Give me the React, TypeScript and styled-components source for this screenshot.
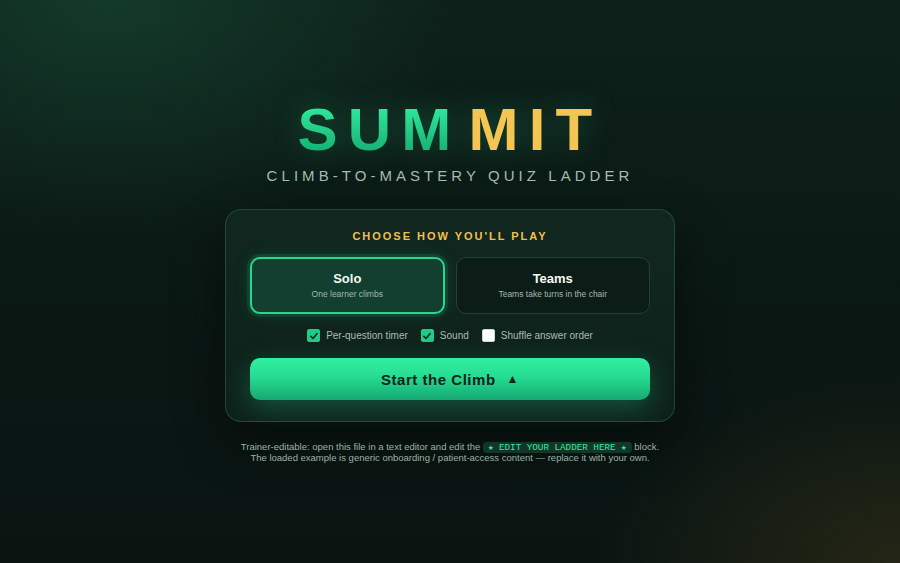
import React, { useState } from 'react'
import styled, { createGlobalStyle } from 'styled-components'

const GlobalStyle = createGlobalStyle`
  html, body {
    margin: 0;
    padding: 0;
    height: 100%;
  }
  body {
    font-family: 'Liberation Sans', Arial, sans-serif;
    background: #0a1612;
    color: #e8f2ec;
  }
  #root {
    min-height: 100vh;
  }
`

const Page = styled.main`
  min-height: 100vh;
  box-sizing: border-box;
  display: flex;
  flex-direction: column;
  align-items: center;
  justify-content: center;
  padding: 0 20px;
  background:
    radial-gradient(ellipse 55% 60% at 12% 0%, rgba(24, 78, 56, 0.55), transparent 70%),
    radial-gradient(ellipse 45% 45% at 100% 100%, rgba(58, 52, 24, 0.55), transparent 75%),
    linear-gradient(180deg, #0d211a 0%, #0a1713 60%, #0a1512 100%);
`

const Title = styled.h1`
  margin: 0;
  font-size: 60px;
  line-height: 60px;
  font-weight: 700;
  letter-spacing: 0.17em;
  filter: drop-shadow(0 0 14px rgba(46, 232, 154, 0.25));
`

const TitlePart = styled.span<{ $tone: 'green' | 'gold' }>`
  display: inline-block;
  ${({ $tone }) =>
    $tone === 'green'
      ? `
    background: linear-gradient(180deg, #33f0a2 0%, #12a86c 100%);
    -webkit-background-clip: text;
    background-clip: text;
    color: transparent;
  `
      : `
    color: #f4c552;
    margin-left: 7px;
  `}
`

const Subtitle = styled.p`
  margin: 8px 0 0;
  font-size: 15px;
  line-height: 15px;
  letter-spacing: 0.27em;
  color: #a3bdb0;
  text-transform: uppercase;
`

const Card = styled.section`
  margin-top: 26px;
  width: 450px;
  box-sizing: border-box;
  padding: 21px 24px 21px;
  border-radius: 16px;
  border: 1px solid rgba(70, 140, 108, 0.35);
  background: linear-gradient(180deg, #10271f 0%, #0e211b 100%);
  box-shadow: 0 20px 50px rgba(0, 0, 0, 0.45);
  display: flex;
  flex-direction: column;
  align-items: stretch;
`

const CardHeading = styled.h2`
  margin: 0;
  text-align: center;
  font-size: 11px;
  line-height: 11px;
  font-weight: 700;
  letter-spacing: 0.18em;
  color: #f0c04e;
`

const ModeRow = styled.div`
  margin-top: 15px;
  display: grid;
  grid-template-columns: 1fr 1fr;
  gap: 11px;
`

const ModeButton = styled.button<{ $active: boolean }>`
  height: 57px;
  padding: 0;
  border-radius: 10px;
  font-family: inherit;
  cursor: pointer;
  display: flex;
  flex-direction: column;
  align-items: center;
  justify-content: center;
  gap: 5px;
  box-sizing: border-box;
  border: ${({ $active }) => ($active ? '2px solid #28d68e' : '1.5px solid #1f4436')};
  background: ${({ $active }) => ($active ? '#123f2f' : '#0c1d17')};
  box-shadow: ${({ $active }) =>
    $active ? '0 0 0 3px rgba(40, 214, 142, 0.12), 0 0 16px rgba(40, 214, 142, 0.18)' : 'none'};
`

const ModeTitle = styled.span`
  font-size: 13px;
  line-height: 13px;
  font-weight: 700;
  color: #f4faf6;
`

const ModeText = styled.span`
  font-size: 8.5px;
  line-height: 9px;
  color: #a0b8ac;
`

const Options = styled.div`
  margin-top: 15px;
  display: flex;
  justify-content: center;
  gap: 13px;
`

const Option = styled.label`
  display: flex;
  align-items: center;
  gap: 6px;
  cursor: pointer;
  font-size: 10px;
  color: #a6bcb1;
`

const Box = styled.span<{ $checked: boolean }>`
  width: 13px;
  height: 13px;
  box-sizing: border-box;
  border-radius: 2px;
  display: flex;
  align-items: center;
  justify-content: center;
  background: ${({ $checked }) => ($checked ? '#22c98a' : '#ffffff')};
  border: 1px solid ${({ $checked }) => ($checked ? '#22c98a' : '#cfd8d3')};
`

const StartButton = styled.button`
  margin-top: 16px;
  height: 42px;
  border: 0;
  border-radius: 10px;
  cursor: pointer;
  font-family: inherit;
  font-size: 15px;
  font-weight: 700;
  letter-spacing: 0.035em;
  color: #0a2419;
  background: linear-gradient(180deg, #30f0a0 0%, #26dc92 45%, #16a872 100%);
  box-shadow: 0 8px 26px rgba(40, 220, 146, 0.28);
  display: flex;
  align-items: center;
  justify-content: center;
  gap: 11px;
`

const Arrow = styled.span`
  font-size: 12px;
`

const Footer = styled.p`
  margin: 19px 0 0;
  text-align: center;
  font-size: 9.5px;
  line-height: 11px;
  color: #9ab2a6;
`

const Code = styled.code`
  font-family: 'Liberation Mono', 'DejaVu Sans Mono', monospace;
  font-size: 9.25px;
  line-height: 8px;
  color: #3ee89c;
  background: #12372a;
  border-radius: 4px;
  padding: 0 5px;
`

const Check = () => (
  <svg width="10" height="10" viewBox="0 0 12 12" fill="none">
    <path d="M2.2 6.4 L4.8 9 L9.8 3" stroke="#0b2a1d" strokeWidth="1.9" strokeLinecap="round" strokeLinejoin="round" />
  </svg>
)

const modes = [
  { id: 'solo', title: 'Solo', text: 'One learner climbs' },
  { id: 'teams', title: 'Teams', text: 'Teams take turns in the chair' }
]

const App = (): JSX.Element => {
  const [mode, setMode] = useState('solo')
  const [opts, setOpts] = useState({ timer: true, sound: true, shuffle: false })

  const toggle = (key: keyof typeof opts) => setOpts({ ...opts, [key]: !opts[key] })

  const options: { key: keyof typeof opts; label: string }[] = [
    { key: 'timer', label: 'Per-question timer' },
    { key: 'sound', label: 'Sound' },
    { key: 'shuffle', label: 'Shuffle answer order' }
  ]

  return (
    <>
      <GlobalStyle />
      <Page>
        <Title>
          <TitlePart $tone="green">SUM</TitlePart>
          <TitlePart $tone="gold">MIT</TitlePart>
        </Title>
        <Subtitle>Climb-to-Mastery Quiz Ladder</Subtitle>

        <Card>
          <CardHeading>CHOOSE HOW YOU'LL PLAY</CardHeading>
          <ModeRow>
            {modes.map(m => (
              <ModeButton key={m.id} $active={mode === m.id} onClick={() => setMode(m.id)}>
                <ModeTitle>{m.title}</ModeTitle>
                <ModeText>{m.text}</ModeText>
              </ModeButton>
            ))}
          </ModeRow>
          <Options>
            {options.map(o => (
              <Option key={o.key} onClick={() => toggle(o.key)}>
                <Box $checked={opts[o.key]}>{opts[o.key] && <Check />}</Box>
                {o.label}
              </Option>
            ))}
          </Options>
          <StartButton>
            <span>Start the Climb</span>
            <Arrow>▲</Arrow>
          </StartButton>
        </Card>

        <Footer>
          Trainer-editable: open this file in a text editor and edit the{' '}
          <Code>★ EDIT YOUR LADDER HERE ★</Code> block.
          <br />
          The loaded example is generic onboarding / patient-access content — replace it with your own.
        </Footer>
      </Page>
    </>
  )
}

export default App
